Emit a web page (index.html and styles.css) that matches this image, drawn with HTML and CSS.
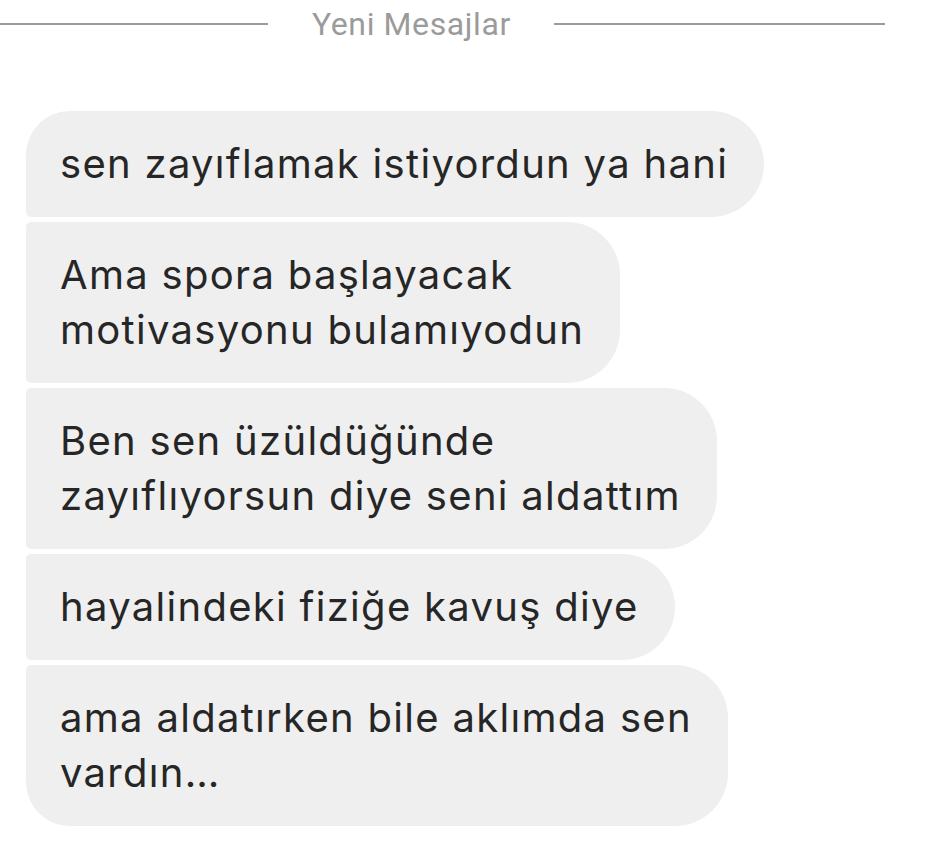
FILE: index.html
```html
<!DOCTYPE html>
<html lang="tr">
<head>
    <meta charset="UTF-8">
    <meta name="viewport" content="width=device-width, initial-scale=1.0">
    <title>Mesajlar</title>
    <link rel="stylesheet" href="styles.css">
</head>
<body>
    <!-- New messages divider -->
    <div class="divider">
        <span class="line line-left"></span>
        <span class="divider-label">Yeni Mesajlar</span>
        <span class="line line-right"></span>
    </div>

    <!-- Message group -->
    <div class="thread">
        <div class="bubble first">sen zayıflamak istiyordun ya hani</div>
        <div class="bubble">Ama spora başlayacak<br>motivasyonu bulamıyodun</div>
        <div class="bubble">Ben sen üzüldüğünde<br>zayıflıyorsun diye seni aldattım</div>
        <div class="bubble">hayalindeki fiziğe kavuş diye</div>
        <div class="bubble last">ama aldatırken bile aklımda sen<br>vardın…</div>
    </div>
</body>
</html>
```

FILE: styles.css
```css
body {
    margin: 0;
    background: #FFFFFF;
    font-family: 'Inter', 'Noto Sans', sans-serif;
    color: #262626;
}

.divider {
    display: flex;
    align-items: center;
    width: 885px;
    height: 48px;
}

.line {
    height: 2px;
    background: #9B9B9B;
}

.line-left {
    flex: 0 0 268px;
}

.line-right {
    flex: 1;
}

.divider-label {
    padding: 0 43px 0 44px;
    font-family: 'Roboto', sans-serif;
    font-size: 32px;
    letter-spacing: 0.6px;
    color: #9B9B9B;
    line-height: 48px;
}

.thread {
    display: flex;
    flex-direction: column;
    align-items: flex-start;
    gap: 5px;
    padding: 63px 26px 20px;
}

.bubble {
    background: #EFEFEF;
    padding: 25px 36px 26px 34px;
    font-size: 40px;
    letter-spacing: 1.3px;
    line-height: 55px;
    border-radius: 53px;
    border-top-left-radius: 5px;
    border-bottom-left-radius: 5px;
}

.bubble.first {
    border-top-left-radius: 44px;
}

.bubble.last {
    border-bottom-left-radius: 44px;
}
```
